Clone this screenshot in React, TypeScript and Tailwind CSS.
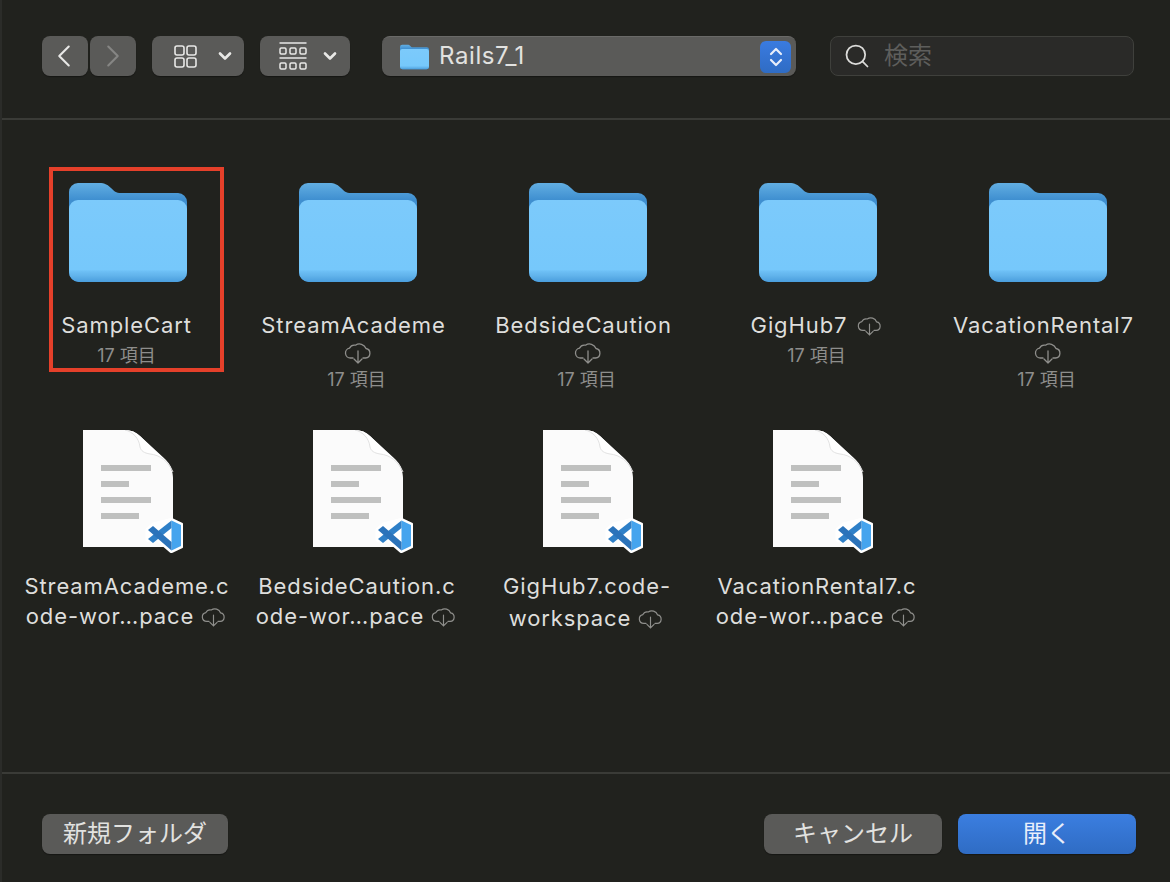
import React, { useId } from 'react';
import { ChevronLeft, ChevronRight, ChevronDown, Search } from 'lucide-react';

const FONT = 'font-[Inter,"Noto_Sans_CJK_JP",sans-serif]';

const FolderIcon = ({ className }: { className?: string }) => {
  const id = useId();
  return (
    <svg viewBox="0 0 118 99" className={className}>
      <defs>
        <linearGradient id={`${id}b`} x1="0" y1="0" x2="0" y2="1">
          <stop offset="0" stopColor="#62aee2" />
          <stop offset="0.17" stopColor="#3f8fd0" />
        </linearGradient>
        <linearGradient id={`${id}f`} x1="0" y1="0" x2="0" y2="1">
          <stop offset="0" stopColor="#7ccafb" />
          <stop offset="0.85" stopColor="#76c8fb" />
          <stop offset="0.87" stopColor="#6dbff5" />
          <stop offset="0.92" stopColor="#62b4ec" />
          <stop offset="1" stopColor="#4a9edd" />
        </linearGradient>
      </defs>
      <path d="M0 9a9 9 0 0 1 9-9h21c6 0 9 2 12 5s5 5 10 5h57a9 9 0 0 1 9 9v70a10 10 0 0 1-10 10H10A10 10 0 0 1 0 89z" fill={`url(#${id}b)`} />
      <path d="M0 26a9 9 0 0 1 9-9h100a9 9 0 0 1 9 9v63a10 10 0 0 1-10 10H10A10 10 0 0 1 0 89z" fill={`url(#${id}f)`} />
    </svg>
  );
};

const CloudIcon = ({ className }: { className?: string }) => (
  <svg viewBox="0 0 28 23" fill="none" stroke="#8f8f8c" strokeWidth="1.3" strokeLinecap="round" strokeLinejoin="round" className={className}>
    <path d="M9 17H6.5a5 5 0 0 1-1-9.9A5.5 5.5 0 0 1 11.5 4.2 7 7 0 0 1 22 7.5a4.8 4.8 0 0 1-.5 9.5H19" />
    <path d="M14 10v12M10 18l4 4 4-4" />
  </svg>
);

const WorkspaceIcon = ({ className }: { className?: string }) => (
  <svg viewBox="0 0 100 125" className={className}>
    <path d="M0 0H42C48 0 53 2 57 6L82 30C88 36 90 42 90 48V117H0z" fill="#fbfbfb" />
    <path d="M42 0C50 2 56 8 57 17 58 21 61 23 67 24 77 25 85 31 90 42 88 36 86 33 82 29L57 6C53 2 48 0 42 0z" fill="#ffffff" />
    <path d="M42 0C50 2 56 8 57 17 58 21 61 23 67 24 77 25 85 31 90 42" fill="none" stroke="#e2e2e2" strokeWidth="1" />
    <g fill="#bfc0bf">
      <rect x="18" y="35" width="50" height="6" />
      <rect x="18" y="51" width="28" height="6" />
      <rect x="18" y="67" width="50" height="6" />
      <rect x="18" y="83" width="38" height="6" />
    </g>
    <g transform="translate(1 0)">
      <path d="M87.5 90.5 97 95 97 116 87.5 120.5 69.5 105 64 109.5 64 100 69.5 95z" fill="#ffffff" stroke="#ffffff" strokeWidth="5" strokeLinejoin="round" />
      <path d="M87.5 90.5 97 95V116L87.5 120.5z" fill="#45a4ee" />
      <path d="M87.5 90.5 64 109 69 113 87.5 98z" fill="#2f80c8" />
      <path d="M64 100 69 96 87.5 112V120.5z" fill="#2b73ba" />
    </g>
  </svg>
);

const ToolButton = ({ className = '', children }: { className?: string; children: React.ReactNode }) => (
  <div className={`h-10 rounded-lg bg-[#5a5a58] shadow-[0_1px_1px_rgba(0,0,0,0.35)] flex items-center ${className}`}>{children}</div>
);

const Label = ({ children, cloud, className = '' }: { children: React.ReactNode; cloud?: string; className?: string }) => (
  <div className={`flex items-center justify-center h-[30px] whitespace-nowrap text-[22px] leading-[30px] tracking-[0.9px] text-[#dededc] ${className}`}>
    {children}
    {cloud && <CloudIcon className={`w-[25px] h-[21px] ${cloud}`} />}
  </div>
);

const Count = () => <div className="h-6 mt-1 mr-[3px] leading-6 text-[18px] text-[#8e8e8c] whitespace-nowrap">17 項目</div>;

const folders = [
  { name: 'SampleCart', cloud: 'none', shift: 'mr-[3px]' },
  { name: 'StreamAcademe', cloud: 'below', shift: 'mr-[9px]' },
  { name: 'BedsideCaution', cloud: 'below', shift: 'mr-[9px]' },
  { name: 'GigHub7', cloud: 'inline', shift: 'mr-[3px]' },
  { name: 'VacationRental7', cloud: 'below', shift: 'mr-[9px]' },
];

const files = [
  { lines: ['StreamAcademe.c', 'ode-wor…pace'], second: 'mr-[4px]' },
  { lines: ['BedsideCaution.c', 'ode-wor…pace'], second: 'mr-[4px]' },
  { lines: ['GigHub7.code-', 'workspace'], second: 'mr-[4px] mt-[2px]' },
  { lines: ['VacationRental7.c', 'ode-wor…pace'], second: 'mr-[4px]' },
];

export default function App() {
  return (
    <div className={`w-[1170px] h-[882px] bg-[#21221e] border-l-2 border-[#2b2c29] flex flex-col overflow-hidden ${FONT}`}>
      <div className="h-[82px] box-content shrink-0 border-b-2 border-[#3a3b37] flex items-start pt-9 pl-10">
        <ToolButton className="w-[46px] justify-center text-[#e8e8e6]">
          <ChevronLeft className="w-[38px] h-[38px] -ml-[3px]" strokeWidth={1.3} />
        </ToolButton>
        <ToolButton className="w-[46px] ml-[2px] justify-center text-[#868684]">
          <ChevronRight className="w-[38px] h-[38px]" strokeWidth={1.3} />
        </ToolButton>
        <ToolButton className="w-[92px] ml-4 pl-[22px] text-[#e8e8e6]">
          <svg viewBox="0 0 23 23" fill="none" stroke="currentColor" strokeWidth="1.6" className="w-[23px] h-[23px]">
            <rect x="1" y="1" width="9" height="9" rx="2" />
            <rect x="13" y="1" width="9" height="9" rx="2" />
            <rect x="1" y="13" width="9" height="9" rx="2" />
            <rect x="13" y="13" width="9" height="9" rx="2" />
          </svg>
          <ChevronDown className="w-[20px] h-[20px] ml-[18px]" strokeWidth={3.2} />
        </ToolButton>
        <ToolButton className="w-[90px] ml-4 pl-[19px] text-[#e8e8e6]">
          <svg viewBox="0 0 28 28" fill="none" stroke="currentColor" strokeWidth="1.5" className="w-[28px] h-[28px]">
            <path d="M0.5 1h27M0.5 16h27" />
            <rect x="1" y="6" width="6" height="6" rx="1.2" />
            <rect x="11" y="6" width="6" height="6" rx="1.2" />
            <rect x="21" y="6" width="6" height="6" rx="1.2" />
            <rect x="1" y="21" width="6" height="6" rx="1.2" />
            <rect x="11" y="21" width="6" height="6" rx="1.2" />
            <rect x="21" y="21" width="6" height="6" rx="1.2" />
          </svg>
          <ChevronDown className="w-[20px] h-[20px] ml-[13px]" strokeWidth={3.2} />
        </ToolButton>
        <ToolButton className="w-[414px] ml-8 pl-[18px] pr-[5px] border-t border-[#6a6a68]">
          <FolderIcon className="w-[29px] h-[26px]" />
          <span className="ml-[10px] -mt-[2px] text-[24px] text-[#e2e2e0] tracking-[0.6px]">Rails7_1</span>
          <div className="ml-auto w-[31px] h-[32px] rounded-md bg-gradient-to-b from-[#3a7be0] to-[#2f6cc4] flex flex-col items-center justify-center text-[#e8eefa]">
            <svg viewBox="0 0 16 24" fill="none" stroke="currentColor" strokeWidth="2.2" strokeLinecap="round" strokeLinejoin="round" className="w-4 h-6">
              <path d="M3 9l5-5 5 5M3 15l5 5 5-5" />
            </svg>
          </div>
        </ToolButton>
        <div className="w-[304px] h-[40px] ml-[34px] rounded-lg bg-[#2a2a28] border border-[#3f403c] flex items-center pl-[12px]">
          <Search className="w-[28px] h-[28px] text-[#dcdcda]" strokeWidth={1.5} />
          <span className="ml-[13px] text-[24px] text-[#5e5e5c]">検索</span>
        </div>
      </div>

      <div className="relative flex-1">
        <div className="grid grid-cols-[repeat(5,230px)] pl-[11px] pt-[63px]">
          {folders.map((f) => (
            <div key={f.name} className="h-[247px] flex flex-col items-center">
              <FolderIcon className="w-[118px] h-[99px]" />
              <div className="h-[28px]" />
              <Label cloud={f.cloud === 'inline' ? 'ml-[10px]' : undefined} className={f.shift}>{f.name}</Label>
              {f.cloud === 'below' && <CloudIcon className="w-[28px] h-[23px] mt-[1px]" />}
              <Count />
            </div>
          ))}
          {files.map((f) => (
            <div key={f.lines[0]} className="flex flex-col items-center">
              <WorkspaceIcon className="w-[100px] h-[125px] ml-[9px]" />
              <div className="h-[16px]" />
              <Label className="mr-[2px]">{f.lines[0]}</Label>
              <Label cloud="ml-[7px]" className={f.second}>{f.lines[1]}</Label>
            </div>
          ))}
        </div>
        <div className="absolute left-[47px] top-[47px] w-[175px] h-[205px] border-[4px] border-[#e5402a]" />
      </div>

      <div className="h-[110px] shrink-0 border-t-2 border-[#3a3b37] flex items-start pt-[40px] pl-10 pr-[34px]">
        <ToolButton className="w-[186px] justify-center text-[24px] text-[#e2e2e0]">新規フォルダ</ToolButton>
        <ToolButton className="w-[178px] ml-auto justify-center text-[24px] text-[#e2e2e0]">キャンセル</ToolButton>
        <div className="w-[178px] h-10 ml-4 rounded-lg bg-gradient-to-b from-[#3b7ee0] to-[#2f6cc4] flex items-center justify-center text-[24px] text-[#e8eefa] shadow-[0_1px_1px_rgba(0,0,0,0.35)]">開く</div>
      </div>
    </div>
  );
}
